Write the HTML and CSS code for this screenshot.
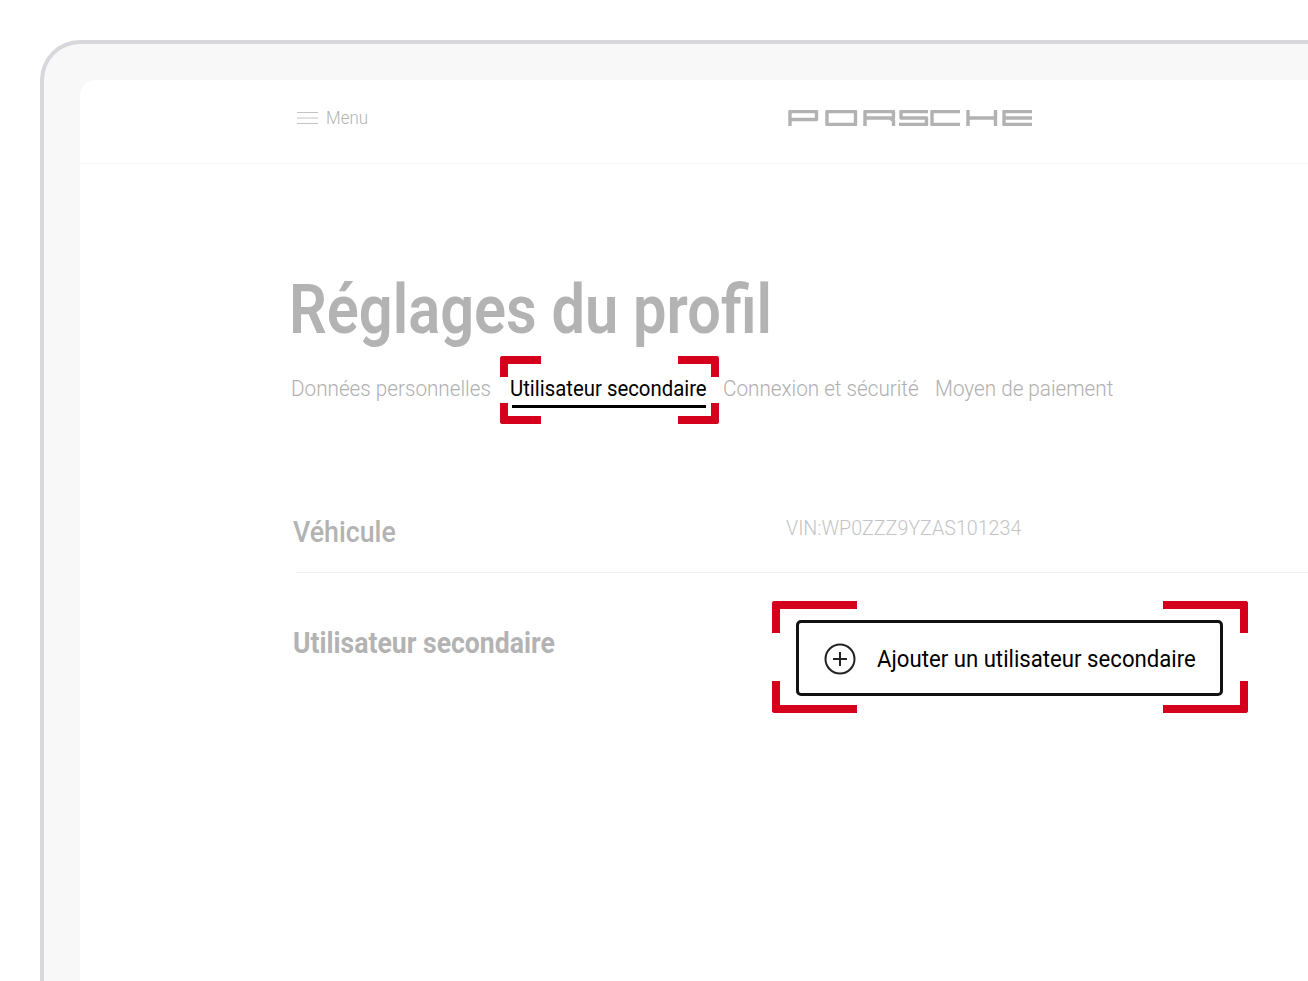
FILE: index.html
```html
<!DOCTYPE html>
<html lang="fr">
<head>
  <meta charset="UTF-8" />
  <meta name="viewport" content="width=device-width, initial-scale=1.0" />
  <title>Réglages du profil - Porsche</title>
  <link rel="stylesheet" href="styles.css">
</head>
<body>
  <div class="frame">
    <div class="screen">
      <header class="topbar">
        <div class="menu">
          <svg class="menu-icon" width="22" height="14" viewBox="0 0 22 14" aria-hidden="true">
            <path d="M0 1.5H21M0 7H21M0 12.5H21" />
          </svg>
          <span class="txt">Menu</span>
        </div>
        <svg class="logo" width="244" height="16" viewBox="0 0 244 16" role="img" aria-label="Porsche">
          <path d="M2 16V1.5H28.5V9.5H2" />
          <path d="M39 1.5H67.5V14.5H39Z" />
          <path d="M77 16V1.5H105.5V8H77M102 8L105.5 10.5V16" />
          <path d="M140 1.5H113V8H138.5V14.5H111" />
          <path d="M172 1.5H144V14.5H172" />
          <path d="M180 0V16M207.5 0V16M180 8H207.5" />
          <path d="M244 1.5H216V14.5H244M216 8H244" />
        </svg>
      </header>

      <main class="content">
        <h1><span class="txt">Réglages du profil</span></h1>

        <nav class="tabs">
          <a class="tab"><span class="txt">Données personnelles</span></a>
          <a class="tab tab-active">
            <span class="txt">Utilisateur secondaire</span>
            <span class="marker marker-tab">
              <i class="corner tl"></i><i class="corner tr"></i><i class="corner bl"></i><i class="corner br"></i>
            </span>
          </a>
          <a class="tab"><span class="txt">Connexion et sécurité</span></a>
          <a class="tab"><span class="txt">Moyen de paiement</span></a>
        </nav>

        <section class="rows">
          <div class="row row-vehicle">
            <h2><span class="txt">Véhicule</span></h2>
            <p class="vin"><span class="txt">VIN:WP0ZZZ9YZAS101234</span></p>
          </div>
          <div class="row row-user">
            <h2><span class="txt">Utilisateur secondaire</span></h2>
            <button class="add-btn" type="button">
              <svg class="plus-icon" width="32" height="32" viewBox="0 0 32 32" aria-hidden="true">
                <circle cx="16" cy="16" r="14.5" />
                <path d="M16 9V23M9 16H23" />
              </svg>
              <span class="txt">Ajouter un utilisateur secondaire</span>
              <span class="marker marker-btn">
                <i class="corner tl"></i><i class="corner tr"></i><i class="corner bl"></i><i class="corner br"></i>
              </span>
            </button>
          </div>
        </section>
      </main>
    </div>
  </div>
</body>
</html>
```

FILE: styles.css
```css
html, body {
  height: 100%;
}

body {
  margin: 0;
  height: 981px;
  overflow: hidden;
  background-color: #fff;
  font-family: Roboto, "Liberation Sans", sans-serif;
}

/* the brand font is narrower than Roboto, so each text gets squeezed a bit */
.txt {
  display: inline-block;
  white-space: nowrap;
  transform-origin: left center;
}

.frame {
  box-sizing: border-box;
  height: 941px;
  margin: 40px 0 0 40px;
  padding: 36px 0 0 36px;
  background-color: #f8f8f8;
  border: solid #d8d8dc;
  border-width: 4px 0 0 4px;
  border-top-left-radius: 40px;
}

.screen {
  height: 100%;
  background-color: #fff;
  border-top-left-radius: 16px;
}

.topbar {
  box-sizing: border-box;
  height: 84px;
  display: flex;
  align-items: center;
  padding: 0 0 8px 217px;
  border-bottom: 1px solid #f6f6f6;
}

.menu {
  display: flex;
  align-items: center;
  gap: 7px;
  width: 491px;
  font-size: 18px;
  font-weight: 300;
  color: #b4b4b4;
}

.menu .txt {
  transform: scaleX(0.94);
}

.menu-icon path {
  fill: none;
  stroke: #c4c4c4;
  stroke-width: 1;
}

.logo path {
  fill: none;
  stroke: #b2b2b2;
  stroke-width: 3.4;
  stroke-linejoin: round;
}

.content {
  padding: 106px 0 0 209px;
}

h1 {
  margin: 0;
  font-size: 69px;
  line-height: 80px;
  font-weight: 600;
  color: #b3b3b3;
}

h1 .txt {
  transform: scaleX(0.863);
}

.tabs {
  display: grid;
  grid-template-columns: 219px 213px 212px auto;
  justify-items: start;
  margin: 25px 0 0 2px;
}

.tab {
  position: relative;
  padding: 0 0 5px;
  font-size: 22px;
  line-height: 28px;
  font-weight: 300;
  color: #b0b0b0;
}

.tab .txt {
  transform: scaleX(0.94);
}

.tab-active {
  width: 197px;
  font-weight: 400;
  color: #000;
}

.tab-active .txt {
  transform: scaleX(0.925);
}

.tab-active::after {
  content: "";
  position: absolute;
  left: 2px;
  right: 1px;
  bottom: 0;
  height: 3px;
  background-color: #000;
}

.marker {
  position: absolute;
  pointer-events: none;
}

.marker-tab {
  left: -10px;
  right: -12px;
  top: -19px;
  bottom: -16px;
}

.marker-btn {
  left: -27px;
  right: -28px;
  top: -22px;
  bottom: -20px;
}

.corner {
  position: absolute;
  box-sizing: border-box;
  border: 0 solid #d5001c;
}

.marker-tab .corner {
  width: 41px;
  height: 21px;
}

.marker-btn .corner {
  width: 85px;
  height: 32px;
}

.tl {
  top: 0;
  left: 0;
  border-width: 8px 0 0 8px;
  border-top-left-radius: 3px;
}

.tr {
  top: 0;
  right: 0;
  border-width: 8px 8px 0 0;
  border-top-right-radius: 3px;
}

.bl {
  bottom: 0;
  left: 0;
  border-width: 0 0 8px 8px;
  border-bottom-left-radius: 3px;
}

.br {
  bottom: 0;
  right: 0;
  border-width: 0 8px 8px 0;
  border-bottom-right-radius: 3px;
}

.rows {
  margin: 104px 0 0 7px;
}

.row {
  display: grid;
  grid-template-columns: 490px 1fr;
}

.row h2 {
  margin: 0 0 0 -3px;
  color: #b3b3b3;
}

.row-vehicle {
  height: 60px;
  border-bottom: 1px solid #f2f2f2;
}

.row-vehicle h2 {
  font-size: 30px;
  line-height: 40px;
  font-weight: 500;
}

.row-vehicle h2 .txt {
  transform: scaleX(0.892);
}

.vin {
  margin: 0;
  font-size: 21px;
  line-height: 32px;
  font-weight: 300;
  color: #c4c4c6;
}

.vin .txt {
  transform: scaleX(0.936);
}

.row-user {
  padding-top: 47px;
}

.row-user h2 {
  font-size: 29px;
  line-height: 46px;
  font-weight: 700;
}

.row-user h2 .txt {
  transform: scaleX(0.916);
}

.add-btn {
  position: relative;
  box-sizing: border-box;
  width: 427px;
  height: 76px;
  margin-left: 10px;
  display: flex;
  align-items: center;
  gap: 21px;
  padding: 1px 0 0 25px;
  background-color: #fff;
  border: 3px solid #111;
  border-radius: 5px;
  font: 400 24px Roboto, sans-serif;
  color: #000;
}

.add-btn .txt {
  transform: scaleX(0.924);
}

.plus-icon {
  flex-shrink: 0;
}

.plus-icon circle,
.plus-icon path {
  fill: none;
  stroke: #222;
  stroke-width: 2;
}
```
